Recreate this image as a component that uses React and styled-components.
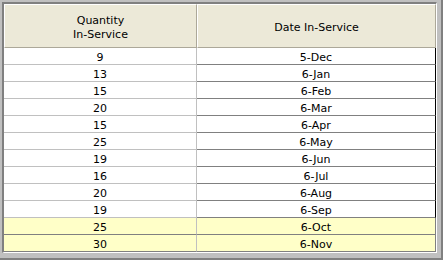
import React from 'react';
import styled, { createGlobalStyle } from 'styled-components';

const GlobalStyle = createGlobalStyle`
	html, body {
		margin: 0;
		padding: 0;
		background: #c0c0c0;
	}
`;

const Frame = styled.div`
	box-sizing: border-box;
	width: 443px;
	height: 260px;
	background: #c0c0c0;
	border-right: 2px solid #808080;
	border-bottom: 2px solid #808080;
	padding: 2px 4px 5px 2px;
	font-family: 'DejaVu Sans', Verdana, sans-serif;
	font-size: 11px;
	color: #000;
`;

const Sunken = styled.div`
	box-sizing: border-box;
	height: 100%;
	border-top: 2px solid #808080;
	border-left: 2px solid #808080;
	border-right: 1px solid #fff;
	border-bottom: 1px solid #fff;
	background: #fff;
	display: grid;
	grid-template-columns: 193px 1fr;
	grid-auto-rows: 17px;
	grid-template-rows: 44px;
	align-content: start;
`;

const HeaderCell = styled.div`
	box-sizing: border-box;
	display: flex;
	align-items: center;
	justify-content: center;
	text-align: center;
	line-height: 14px;
	background: #ece9d8;
	border-top: 1px solid #fff;
	border-left: 1px solid #fff;
	border-right: 1px solid #aca899;
	border-bottom: 1px solid #aca899;
	padding-top: 4px;
`;

const Cell = styled.div`
	box-sizing: border-box;
	display: flex;
	align-items: center;
	justify-content: center;
	line-height: 14px;
	padding-top: 3px;
	background: ${(p) => (p.$highlight ? '#ffffc8' : '#fff')};
	border-bottom: 1px solid ${(p) => (p.$highlight || p.$edit ? '#808080' : '#c0c0c0')};
	border-right: 1px solid
		${(p) => {
			if (!p.$edit) return '#c0c0c0';
			return p.$highlight ? '#808080' : '#000';
		}};
`;

const ROWS = [
	[9, '5-Dec'],
	[13, '6-Jan'],
	[15, '6-Feb'],
	[20, '6-Mar'],
	[15, '6-Apr'],
	[25, '6-May'],
	[19, '6-Jun'],
	[16, '6-Jul'],
	[20, '6-Aug'],
	[19, '6-Sep'],
	[25, '6-Oct', true],
	[30, '6-Nov', true],
];

const App = () => (
	<>
		<GlobalStyle />
		<Frame>
			<Sunken>
				<HeaderCell>
					Quantity
					<br />
					In-Service
				</HeaderCell>
				<HeaderCell>Date In-Service</HeaderCell>
				{ROWS.map(([qty, date, hl]) => (
					<React.Fragment key={date}>
						<Cell $highlight={hl}>{qty}</Cell>
						<Cell $highlight={hl} $edit>
							{date}
						</Cell>
					</React.Fragment>
				))}
			</Sunken>
		</Frame>
	</>
);

export default App;
